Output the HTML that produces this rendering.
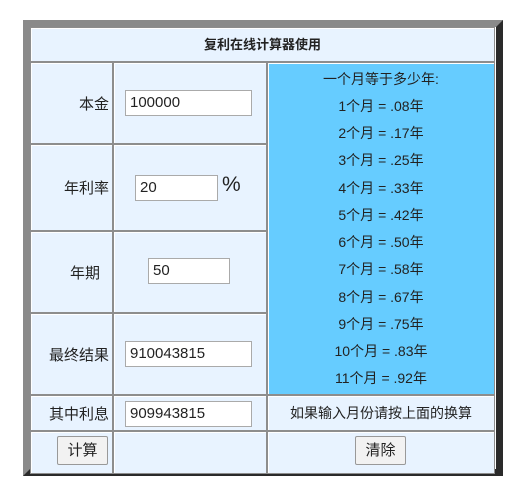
<!DOCTYPE html>
<html><head><meta charset="utf-8"><style>
body{margin:0;width:517px;height:485px;background:#fff;position:relative;overflow:hidden;font-family:"Liberation Sans","Noto Sans CJK SC",sans-serif;font-size:14px;color:#222}
.frame{position:absolute;left:23px;top:20px;width:466px;height:442px;border-style:solid;border-width:7px;border-color:#8a8a8a #2a2a2a #2a2a2a #8a8a8a}
.c{position:absolute;box-sizing:border-box;background:#e8f3ff;border:1px solid #8d8d8d;box-shadow:inset 1px 1px 0 #fff}
.lbl{display:flex;align-items:center;justify-content:flex-end;padding-right:3px;font-size:15px}
.in{position:absolute;box-sizing:border-box;background:#fff;border:1px solid #aaa;font-size:15px;padding:2px 0 0 4px;height:26px;line-height:20px}
.btn{position:absolute;box-sizing:border-box;background:#f2f2f2;border:1px solid #999;font-size:15px;text-align:center;line-height:27px;border-radius:2px}
.blue{background:#66ccff;text-align:center;font-size:14px}
.blue div{position:absolute;left:0;right:0}
</style></head><body>
<div class="frame"></div>
<div class="c" style="left:30px;top:27px;width:465px;height:35px;text-align:center;line-height:33px;font-weight:bold;font-size:13px">复利在线计算器使用</div>
<div class="c lbl" style="left:30px;top:62px;width:83px;height:82px">本金</div>
<div class="c" style="left:113px;top:62px;width:154px;height:82px"></div>
<div class="c lbl" style="left:30px;top:144px;width:83px;height:87px">年利率</div>
<div class="c" style="left:113px;top:144px;width:154px;height:87px"></div>
<div class="c lbl" style="left:30px;top:231px;width:83px;height:82px;padding-right:12px">年期</div>
<div class="c" style="left:113px;top:231px;width:154px;height:82px"></div>
<div class="c lbl" style="left:30px;top:313px;width:83px;height:82px">最终结果</div>
<div class="c" style="left:113px;top:313px;width:154px;height:82px"></div>
<div class="c lbl" style="left:30px;top:395px;width:83px;height:36px">其中利息</div>
<div class="c" style="left:113px;top:395px;width:154px;height:36px"></div>
<div class="c" style="left:267px;top:395px;width:228px;height:36px;text-align:center;line-height:34px;font-size:14px">如果输入月份请按上面的换算</div>
<div class="c" style="left:30px;top:431px;width:83px;height:43px"></div>
<div class="c" style="left:113px;top:431px;width:154px;height:43px"></div>
<div class="c" style="left:267px;top:431px;width:228px;height:43px"></div>
<div class="c blue" style="left:267px;top:62px;width:228px;height:333px">
<div style="top:6px">一个月等于多少年:</div>
<div style="top:33px">1个月 = .08年</div>
<div style="top:60px">2个月 = .17年</div>
<div style="top:87px">3个月 = .25年</div>
<div style="top:115px">4个月 = .33年</div>
<div style="top:142px">5个月 = .42年</div>
<div style="top:169px">6个月 = .50年</div>
<div style="top:196px">7个月 = .58年</div>
<div style="top:224px">8个月 = .67年</div>
<div style="top:251px">9个月 = .75年</div>
<div style="top:278px">10个月 = .83年</div>
<div style="top:305px">11个月 = .92年</div>
</div>
<div class="in" style="left:125px;top:90px;width:127px">100000</div>
<div class="in" style="left:135px;top:175px;width:83px">20</div>
<div style="position:absolute;left:222px;top:173px;font-size:21px">%</div>
<div class="in" style="left:148px;top:258px;width:82px">50</div>
<div class="in" style="left:125px;top:341px;width:127px">910043815</div>
<div class="in" style="left:125px;top:401px;width:127px">909943815</div>
<div class="btn" style="left:57px;top:436px;width:51px;height:29px">计算</div>
<div class="btn" style="left:355px;top:436px;width:51px;height:29px">清除</div>
</body></html>
